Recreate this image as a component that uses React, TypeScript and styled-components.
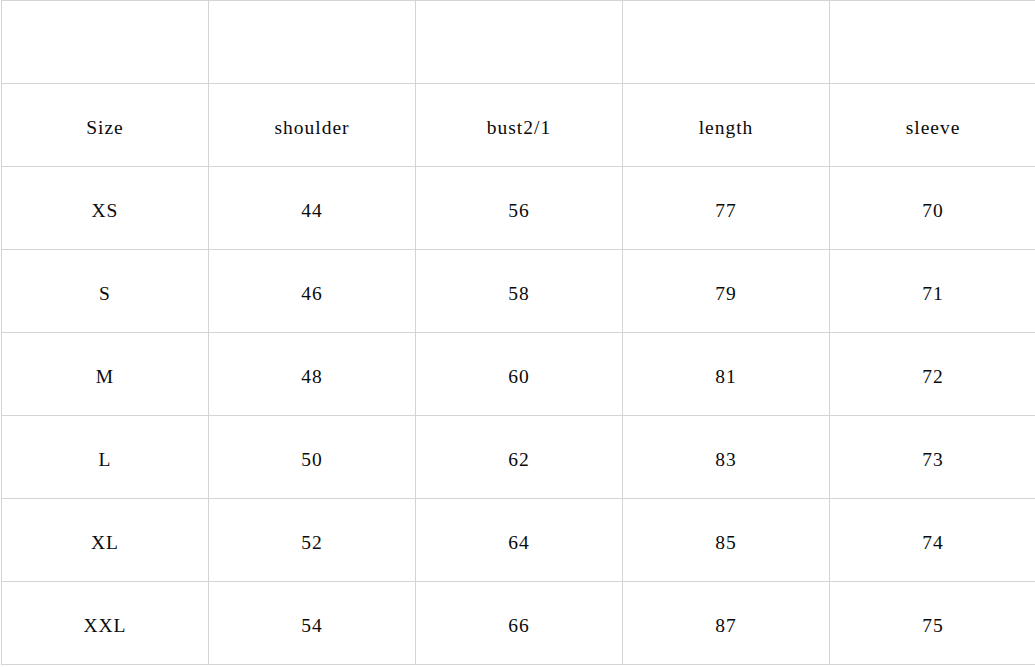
import React from 'react';
import styled, { createGlobalStyle } from 'styled-components';

const GlobalStyle = createGlobalStyle`
  html, body {
    margin: 0;
    padding: 0;
    background: #ffffff;
    overflow: hidden;
  }
`;

const Sheet = styled.div`
  display: grid;
  grid-template-columns: repeat(5, 207px);
  grid-auto-rows: 83px;
  margin-left: 1px;
  width: max-content;
  border-top: 1px solid #d4d4d4;
  border-left: 1px solid #d4d4d4;
  font-family: 'Liberation Serif', 'Noto Sans CJK SC', serif;
  font-size: 19.5px;
  color: #0a0a0a;
`;

const Cell = styled.div`
  display: flex;
  align-items: center;
  justify-content: center;
  padding-top: 5px;
  box-sizing: border-box;
  border-right: 1px solid #d4d4d4;
  border-bottom: 1px solid #d4d4d4;
  white-space: nowrap;
  letter-spacing: 1px;
`;

const header = ['Size', 'shoulder', 'bust2/1', 'length', 'sleeve'];

const sizes = [
  ['XS', '44', '56', '77', '70'],
  ['S', '46', '58', '79', '71'],
  ['M', '48', '60', '81', '72'],
  ['L', '50', '62', '83', '73'],
  ['XL', '52', '64', '85', '74'],
  ['XXL', '54', '66', '87', '75'],
];

export default function App() {
  const rows = [['', '', '', '', ''], header, ...sizes];
  return (
    <>
      <GlobalStyle />
      <Sheet>
        {rows.map((row, i) =>
          row.map((value, j) => <Cell key={`${i}-${j}`}>{value}</Cell>)
        )}
      </Sheet>
    </>
  );
}
